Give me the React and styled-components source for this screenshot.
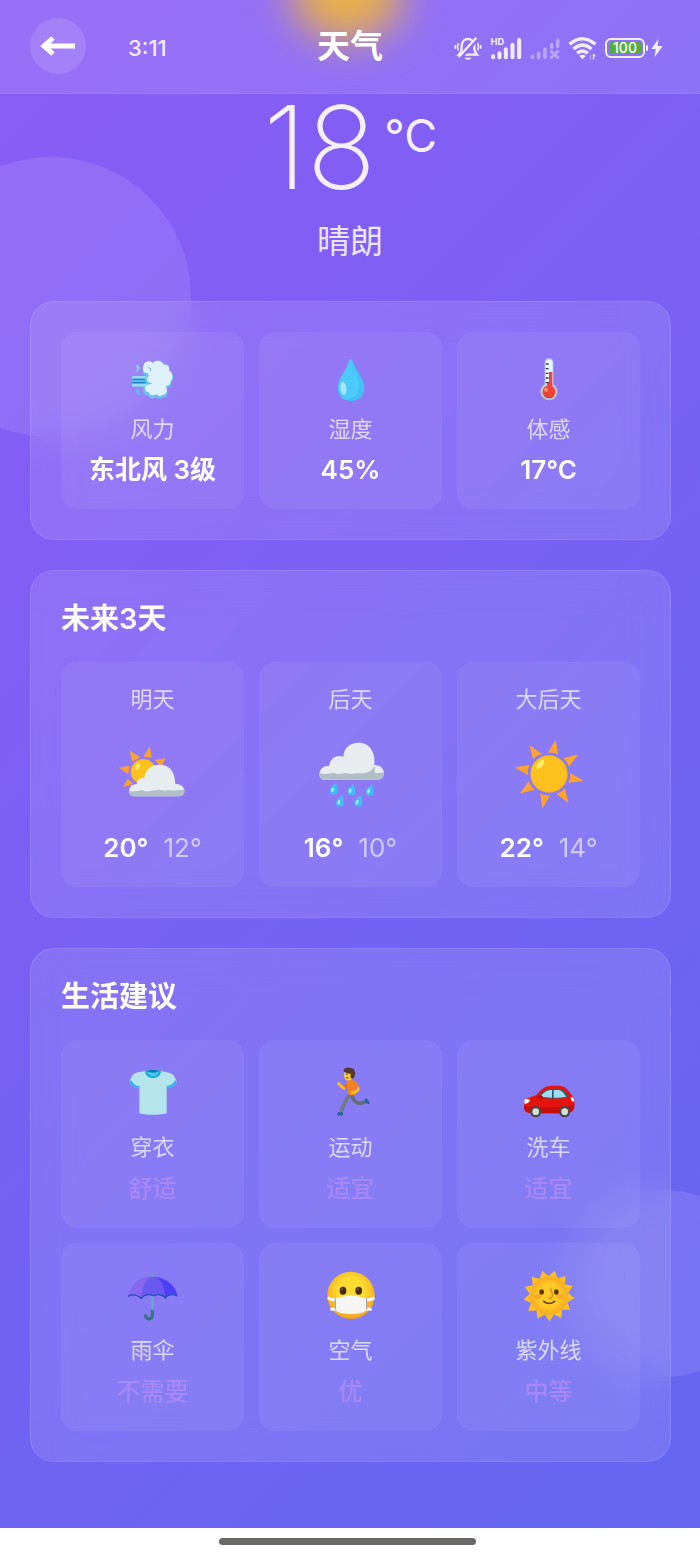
import React from "react";
import styled, { createGlobalStyle } from "styled-components";

const GlobalStyle = createGlobalStyle`
  * {
    box-sizing: border-box;
  }

  body {
    margin: 0;
    background: #fff;
    color: #fff;
    font-family: Inter, "Noto Sans CJK SC", sans-serif;
  }

  h1, h2, p {
    margin: 0;
  }
`;

const WindIcon = () => (
  <svg viewBox="0 0 132 132" aria-hidden="true">
    <path
      d="M14 23c8-4 14 1 12 9-2 6-7 10-13 11 5-5 7-11 1-20z"
      fill="#8ccdf5"
    />
    <path d="M10 94c10-5 18 1 19 16-5 3-10 2-11-4-1-5-3-9-8-12z" fill="#5fb8ee" />
    <path
      d="M38 22c5-14 21-15 29-7 9-12 27-8 32 5 11-2 20 6 17 17 12 8 14 26 5 36 2 10-6 17-15 17 8 12 2 29-11 29-7 6-17 3-21-1-10 7-22 2-24-6-12 0-18-13-12-24 2-5-7-9-10-12V54h16C34 45 32 33 38 22z"
      fill="#6cc0ea"
    />
    <path
      d="M38 21c5-13 20-14 28-6 9-11 26-8 31 5 12-2 20 7 17 17 12 9 13 24 5 33 0 10-8 14-16 14 10 12 3 27-9 27-7 6-14 1-18-3-10 7-22 3-23-6-12 0-14-14-7-22 9 0 14-2 18-5-11 0-17-6-20-12 9-3 11-10 6-18-13 2-17-12-12-24z"
      fill="#dff1f8"
    />
    <path d="M50 28c9-1 14 7 9 15 1-6-2-11-9-15z" fill="#5fb8e2" />
    <path d="M3 54h43v8H3zM3 78h44v8H3z" fill="#94dcf5" />
    <path d="M3 62h45v16H3z" fill="#53bdeb" />
    <path d="M5 64h37M5 74h37" stroke="#1976b8" strokeWidth="3" />
  </svg>
);

const DropIcon = () => (
  <svg viewBox="0 0 132 132" aria-hidden="true">
    <path
      d="M66 3c-5 2-7 9-11 20-8 20-28 40-28 67 0 24 17 39 39 39s40-15 40-39c0-27-20-47-29-67C72 12 71 5 66 3z"
      fill="#40c0f3"
    />
    <path
      d="M66 3c-5 2-7 9-11 20-8 20-28 40-28 67 0 18 9 30 23 36 25-2 46-22 39-56C84 49 75 30 66 3z"
      fill="#4cc9f8"
    />
    <ellipse cx="43" cy="91" rx="9" ry="20" fill="#a4e7fc" transform="rotate(-7 43 91)" />
  </svg>
);

const ThermometerIcon = () => (
  <svg viewBox="0 0 132 132" aria-hidden="true">
    <path d="M53 14a13 13 0 0 1 26 0v64H53z" fill="#b9d4f7" />
    <circle cx="66" cy="101" r="26" fill="#b8c5cc" />
    <path d="M56 15a10 10 0 0 1 20 0v70H56z" fill="#eef8fc" />
    <path d="M66 42h10v48H60V72h6z" fill="#f44336" />
    <circle cx="66" cy="101" r="19" fill="#f44336" />
    <path d="M50 107c8 11 21 14 32 4-5 11-26 14-32-4z" fill="#b83240" />
    <ellipse cx="57" cy="95" rx="5" ry="6" fill="#ffa18b" />
    <path
      d="M56 18h9M56 32h9M56 46h9M56 60h9M56 74h9"
      stroke="#2f4650"
      strokeWidth="4"
    />
  </svg>
);

const PartlyCloudyIcon = () => (
  <svg viewBox="0 0 216 216" aria-hidden="true">
    <path
      d="M98 27l5 31-22-3zM40 40l28 18-22 12zM8 89l30-4-6 22zM20 146l12-22 15 13zM145 62l-29 4 15 19z"
      fill="#ffa229"
      stroke="#ffa229"
      strokeWidth="2"
      strokeLinejoin="round"
    />
    <circle cx="79" cy="101" r="38" fill="#ffb70d" />
    <circle cx="79" cy="101" r="35" fill="#fdc21c" />
    <ellipse cx="62" cy="85" rx="6" ry="10" fill="#fff176" transform="rotate(35 62 85)" />
    <path
      d="M52 175c-22 0-22-36 7-37 2-15 15-20 23-17 1-23 17-41 47-41 27 0 45 19 46 58 32-2 36 37 9 37z"
      fill="#e7ecee"
    />
    <path
      d="M35 158c20 6 30 0 41-2 14 9 26 1 42 1 12-6 20 6 35-1 15 5 35-1 51-1-1 13-7 20-16 20H52c-10 0-17-7-17-17z"
      fill="#b0bec5"
    />
  </svg>
);

const RAIN_DROPS = [
  [58, 151],
  [111, 154],
  [166, 155],
  [77, 188],
  [132, 188],
];

const RainIcon = () => (
  <svg viewBox="0 0 216 216" aria-hidden="true">
    <path
      d="M28 125c-22 0-21-43 15-42 1-20 20-34 42-27 2-27 20-42 46-42 34 0 51 30 47 67 36-1 37 44 10 44z"
      fill="#e8ecef"
    />
    <path
      d="M12 104c16 7 31 3 42 0 15 7 29 2 40 1 14 6 29 0 43 1 25-1 33-8 42-23 1 22-7 25 28 20 0 16-7 22-19 22H29c-11 0-18-9-17-21z"
      fill="#b2bec6"
    />
    {RAIN_DROPS.map(([x, y]) => (
      <g key={x} transform={`translate(${x} ${y}) rotate(16)`}>
        <path d="M0-19c4 11 12 17 12 26 0 16-24 16-24 0 0-9 8-15 12-26z" fill="#40bdf5" />
        <ellipse cx="-4" cy="6" rx="4" ry="7" fill="#a6ecfc" />
      </g>
    ))}
  </svg>
);

const SUN_RAYS = [11, 56, 101, 146, 191, 236, 281, 326];

const SunIcon = () => (
  <svg viewBox="0 0 216 216" aria-hidden="true">
    {SUN_RAYS.map((angle) => (
      <path
        key={angle}
        d="M108 7l13 37q-13-5-26 0z"
        fill="#ffa32c"
        stroke="#ffa32c"
        strokeWidth="3"
        strokeLinejoin="round"
        transform={`rotate(${angle} 108 108)`}
      />
    ))}
    <circle cx="108" cy="108" r="56" fill="#fdb515" />
    <circle cx="107" cy="107" r="53" fill="#fdc01c" />
    <ellipse cx="82" cy="79" rx="8" ry="16" fill="#fff06d" transform="rotate(38 82 79)" />
  </svg>
);

const ShirtIcon = () => (
  <svg viewBox="0 0 156 156" aria-hidden="true">
    <path
      d="M55 14C42 18 24 18 18 26c-5 8-10 17-10 23 6 8 14 14 25 18l4-9v83c8 7 74 7 82 0V58l6 9c10-4 19-10 24-18-1-9-6-17-11-23-8-7-24-8-37-12-12 8-34 8-46 0z"
      fill="#b5e4ec"
    />
    <path
      d="M8 49c6 8 14 14 25 18l3-6C25 58 17 52 12 42zM149 49c-5 8-14 14-24 18l-4-6c10-3 20-10 24-19z"
      fill="#25b7e8"
    />
    <path d="M54 14c0 29 48 29 48 0-12-3-36-3-48 0z" fill="#1ba8dc" />
    <path d="M61 16c0 19 34 19 34 0-9 5-25 5-34 0z" fill="#4bcbed" />
    <path d="M61 16c9-5 25-5 34 0-9 5-25 5-34 0z" fill="#087eaf" />
    <path d="M38 57v18M119 57v18" stroke="#8acddd" strokeWidth="2" />
  </svg>
);

const RunnerIcon = () => (
  <svg viewBox="0 0 156 156" aria-hidden="true">
    <path d="M68 55L58 66" stroke="#ef6c00" strokeWidth="9" />
    <path
      d="M57 67L44 57"
      stroke="#fcc21b"
      strokeWidth="8"
      strokeLinecap="round"
    />
    <circle cx="41" cy="53" r="5" fill="#fcc21b" />
    <path
      d="M72 86c-3 12-16 24-24 52"
      fill="none"
      stroke="#717b85"
      strokeWidth="12"
    />
    <path
      d="M80 86c2 10 10 22 18 25 8 1 14-1 22-4"
      fill="none"
      stroke="#636d77"
      strokeWidth="11"
    />
    <path d="M40 138l14 1v8q-9 3-18 1 0-7 4-10zM118 101l8-4 9 15q-3 4-7 1l-8-2z" fill="#28679d" />
    <path d="M66 46c10-7 22-4 26 2 3 12-1 27-2 38-8 4-16 2-21-3 1-15-7-25-3-37z" fill="#f58220" />
    <path d="M89 49l11 18" stroke="#f58220" strokeWidth="9" />
    <path
      d="M100 67q1 7-14 13"
      fill="none"
      stroke="#fcc21b"
      strokeWidth="8"
      strokeLinecap="round"
    />
    <circle cx="82" cy="80" r="5" fill="#fcc21b" />
    <path d="M60 16c-5 14-3 27 8 28l12-3 4-18-13-12z" fill="#fcc930" />
    <path
      d="M56 16C56 4 70 3 76 6c14 0 17 15 13 24-1 8-9 10-12 5V23C68 25 60 19 56 16z"
      fill="#543930"
    />
    <circle cx="65" cy="25" r="2" fill="#3b2a25" />
    <path d="M62 35l8 1" stroke="#7d3f18" strokeWidth="3" />
  </svg>
);

const CarIcon = () => (
  <svg viewBox="0 0 156 156" aria-hidden="true">
    <path
      d="M4 108c0-9 20-16 35-20 14-16 26-29 46-29h22c18 0 29 12 41 31 9 8 8 33 3 42-6 9-22 10-34 10H32C16 142 4 139 3 126z"
      fill="#e6140e"
    />
    <path d="M3 119c29 7 107 8 151-3-2 22-9 26-37 26H32C14 142 4 137 3 119z" fill="#c90d0e" />
    <path d="M46 93c10-14 22-25 43-25h17c13 0 22 9 31 25-22 6-65 6-91 0z" fill="#355a6b" />
    <path d="M52 92c9-12 19-20 35-20v23zM92 72h15c10 1 16 11 23 20-12 3-26 4-38 3z" fill="#9be0f5" />
    <path d="M4 101c8-2 15-1 17 2-3 7-7 10-16 11zM144 93c5 0 10 3 9 14-7 0-11-7-9-14z" fill="#fff" />
    <ellipse cx="51" cy="94" rx="9" ry="6" fill="#bd1010" />
    <circle cx="38" cy="137" r="17" fill="#47494c" />
    <circle cx="125" cy="137" r="17" fill="#47494c" />
    <circle cx="38" cy="137" r="10" fill="#d3ddd0" />
    <circle cx="125" cy="137" r="10" fill="#d3ddd0" />
  </svg>
);

const UmbrellaIcon = () => (
  <svg viewBox="0 0 156 156" aria-hidden="true">
    <path d="M73 10h6v20h-6z" fill="#719ac6" />
    <path
      d="M76 122v17c0 14-20 14-20 1"
      fill="none"
      stroke="#397387"
      strokeWidth="10"
      strokeLinecap="round"
    />
    <path
      d="M4 81C9 48 39 23 76 23s70 25 75 58c-10-8-28-8-36 6-8-10-24-10-38-9-14-2-29 0-37 10-9-12-24-14-36-7z"
      fill="#6a58f0"
    />
    <path d="M4 81C9 48 39 23 76 23 54 29 45 57 43 88c-9-12-27-14-39-7z" fill="#8667ee" />
    <path d="M76 23c32 3 37 38 39 64 7-14 26-13 36-6-4-34-36-56-75-58z" fill="#4d3ff5" />
    <path
      d="M4 82c14-8 29-3 38 6 10-13 26-13 37-7 12-6 28-6 36 6 8-13 25-12 36-6"
      fill="none"
      stroke="#2450b8"
      strokeWidth="4"
    />
    <path d="M73 82h7v42h-7z" fill="#69a9d0" />
  </svg>
);

const MaskIcon = () => (
  <svg viewBox="0 0 156 156" aria-hidden="true">
    <defs>
      <radialGradient id="maskFace" cx="50%" cy="42%" r="58%">
        <stop offset="50%" stopColor="#fddb30" />
        <stop offset="100%" stopColor="#f3a31b" />
      </radialGradient>
    </defs>
    <circle cx="78" cy="79" r="71" fill="url(#maskFace)" />
    <path
      d="M8 86q12 8 25 6M148 86q-12 8-25 6M16 120q9 2 18-1M140 120q-9 2-18-1"
      fill="none"
      stroke="#f5f5f5"
      strokeWidth="9"
    />
    <path d="M31 88c12 0 27-9 47-9s33 9 47 9v36c-10 9-28 11-47 11s-38-2-47-11z" fill="#f5f5f5" />
    <path d="M31 88v34M125 88v34" stroke="#999b9b" strokeWidth="3" />
    <ellipse cx="54" cy="65" rx="10" ry="12" fill="#422b0d" />
    <ellipse cx="101" cy="65" rx="10" ry="12" fill="#422b0d" />
    <circle cx="51" cy="61" r="3" fill="#8d5b22" />
    <circle cx="98" cy="61" r="3" fill="#8d5b22" />
  </svg>
);

const starPoints = Array.from({ length: 26 }, (_, i) => {
  const radius = i % 2 === 0 ? 77 : 58;
  const angle = ((i * 360) / 26 - 105) * (Math.PI / 180);
  return `${(78 + radius * Math.cos(angle)).toFixed(1)},${(
    80 +
    radius * Math.sin(angle)
  ).toFixed(1)}`;
}).join(" ");

const SunFaceIcon = () => (
  <svg viewBox="0 0 156 156" aria-hidden="true">
    <defs>
      <radialGradient id="sunFace">
        <stop offset="55%" stopColor="#fdcb25" />
        <stop offset="100%" stopColor="#f8aa20" />
      </radialGradient>
    </defs>
    <polygon points={starPoints} fill="#fcbf22" />
    <circle cx="78" cy="80" r="57" fill="url(#sunFace)" />
    <ellipse cx="45" cy="82" rx="11" ry="8" fill="#f99d28" opacity="0.7" />
    <ellipse cx="112" cy="82" rx="11" ry="8" fill="#f99d28" opacity="0.7" />
    <ellipse cx="56" cy="69" rx="7" ry="8" fill="#5b3712" />
    <ellipse cx="100" cy="69" rx="7" ry="8" fill="#5b3712" />
    <path
      d="M82 59c6 12 9 22 4 27-3 3-7 2-9 0"
      fill="none"
      stroke="#e88116"
      strokeWidth="4"
    />
    <path
      d="M62 97q16 13 33 0"
      fill="none"
      stroke="#6a3c13"
      strokeWidth="5"
      strokeLinecap="round"
    />
  </svg>
);

const BackIcon = () => (
  <svg width="36" height="20" viewBox="0 0 36 20" aria-hidden="true">
    <path d="M4 10h31M13 2L4 10l9 8" fill="none" stroke="#fff" strokeWidth="5" />
  </svg>
);

const MutedIcon = () => (
  <svg width="28" height="24" viewBox="0 0 82 72" aria-label="静音">
    <g fill="none" stroke="#f1edff" strokeWidth="7">
      <path d="M18 56h50q-7-8-8-17V28C59 15 50 9 41 9S23 16 22 28v11q0 9-8 17z" />
      <path d="M12 21q-5 11 0 22M3 27v11M70 21q5 11 0 22M79 27v11" strokeWidth="5" />
    </g>
    <path d="M18 68L72 8" stroke="#8f6ff6" strokeWidth="8" />
    <path d="M13 63L66 5" stroke="#f1edff" strokeWidth="7" />
    <path d="M30 65h22q-3 6-11 6t-11-6z" fill="#f1edff" />
  </svg>
);

const SignalIcon = () => (
  <svg width="32" height="24" viewBox="0 0 93 72" aria-label="信号">
    <path
      d="M8 64v-3M27 64V52M46 64V40M66 64V26M86 64V12"
      stroke="#f1edff"
      strokeWidth="12"
      strokeLinecap="round"
    />
    <text x="0" y="26" fill="#f1edff" fontSize="28" fontWeight="700">
      HD
    </text>
  </svg>
);

const NoSignalIcon = () => (
  <svg width="30" height="24" viewBox="0 0 90 72" aria-label="无信号">
    <g fill="none" stroke="#b9a4fa" strokeWidth="11">
      <path d="M7 64v-3M26 64V52M45 64V40M65 34v-8M83 31V13" strokeLinecap="round" />
      <path d="M61 44l25 23M86 44L61 67" strokeWidth="9" />
    </g>
  </svg>
);

const WifiIcon = () => (
  <svg width="29" height="24" viewBox="0 0 84 72" aria-label="无线网络">
    <g fill="none" stroke="#f1edff" strokeWidth="10">
      <path d="M3 25q38-34 78 0" />
      <path d="M15 39q27-24 54 0" />
      <path d="M26 52q16-14 32 0" />
    </g>
    <path d="M32 60q10-8 20 0L42 70z" fill="#f1edff" />
    <path d="M66 70V57" stroke="#b9a4fa" strokeWidth="4" />
    <path d="M75 54v16" stroke="#f1edff" strokeWidth="4" />
    <path d="M75 54l8 7h-8z" fill="#f1edff" />
  </svg>
);

const BoltIcon = () => (
  <svg width="12" height="20" viewBox="0 0 36 60" aria-label="充电中">
    <path d="M22 3L1 33h13l-3 25 24-34H20z" fill="#f1edff" />
  </svg>
);

const details = [
  { label: "风力", value: "东北风 3级", Icon: WindIcon },
  { label: "湿度", value: "45%", Icon: DropIcon },
  { label: "体感", value: "17°C", Icon: ThermometerIcon },
];

const forecast = [
  { day: "明天", high: "20°", low: "12°", Icon: PartlyCloudyIcon },
  { day: "后天", high: "16°", low: "10°", Icon: RainIcon },
  { day: "大后天", high: "22°", low: "14°", Icon: SunIcon },
];

const tips = [
  { label: "穿衣", value: "舒适", Icon: ShirtIcon },
  { label: "运动", value: "适宜", Icon: RunnerIcon },
  { label: "洗车", value: "适宜", Icon: CarIcon },
  { label: "雨伞", value: "不需要", Icon: UmbrellaIcon },
  { label: "空气", value: "优", Icon: MaskIcon },
  { label: "紫外线", value: "中等", Icon: SunFaceIcon },
];

const App = () => {
  return (
    <>
      <GlobalStyle />
      <Screen>
        <LeftBubble />
        <RightBubble />
        <Header>
          <Glow />
          <HeaderStart>
            <BackButton type="button" aria-label="返回">
              <BackIcon />
            </BackButton>
            <Clock>3:11</Clock>
          </HeaderStart>
          <Title>天气</Title>
          <StatusIcons>
            <MutedIcon />
            <SignalIcon />
            <NoSignalIcon />
            <WifiIcon />
            <Power>
              <Battery>
                <BatteryLevel>100</BatteryLevel>
              </Battery>
              <BoltIcon />
            </Power>
          </StatusIcons>
        </Header>

        <Hero>
          <Temperature>
            18<Unit>°C</Unit>
          </Temperature>
          <Condition>晴朗</Condition>
        </Hero>

        <Content>
          <Card>
            <Grid>
              {details.map(({ label, value, Icon }) => (
                <Tile key={label}>
                  <IconBox $height={52} $size={44}>
                    <Icon />
                  </IconBox>
                  <Label $top={8}>{label}</Label>
                  <Value>{value}</Value>
                </Tile>
              ))}
            </Grid>
          </Card>

          <Card>
            <CardTitle>未来3天</CardTitle>
            <Grid>
              {forecast.map(({ day, high, low, Icon }) => (
                <Tile key={day}>
                  <Label $top={0}>{day}</Label>
                  <ForecastIcon $height={80} $size={72}>
                    <Icon />
                  </ForecastIcon>
                  <Temps>
                    <High>{high}</High>
                    <Low>{low}</Low>
                  </Temps>
                </Tile>
              ))}
            </Grid>
          </Card>

          <Card>
            <CardTitle>生活建议</CardTitle>
            <Grid>
              {tips.map(({ label, value, Icon }) => (
                <Tile key={label}>
                  <IconBox $height={60} $size={52}>
                    <Icon />
                  </IconBox>
                  <Label $top={10}>{label}</Label>
                  <TipValue>{value}</TipValue>
                </Tile>
              ))}
            </Grid>
          </Card>
        </Content>
      </Screen>
      <HomeArea>
        <HomeBar />
      </HomeArea>
    </>
  );
};

export default App;

const Screen = styled.div`
  position: relative;
  overflow: hidden;
  padding-bottom: 66px;
  background: linear-gradient(135deg, #8b5cf6 0%, #6366f1 100%);
`;

const Bubble = styled.div`
  position: absolute;
  border-radius: 50%;
  background: rgba(255, 255, 255, 0.1);
`;

const LeftBubble = styled(Bubble)`
  top: 157px;
  left: -89px;
  width: 280px;
  height: 280px;
`;

const RightBubble = styled(Bubble)`
  right: -60px;
  bottom: 151px;
  width: 187px;
  height: 187px;
`;

const Header = styled.header`
  position: relative;
  display: grid;
  grid-template-columns: 1fr auto 1fr;
  align-items: center;
  height: 94px;
  padding: 0 30px 2px;
  overflow: hidden;
  background: rgba(255, 255, 255, 0.12);
  border-bottom: 1px solid rgba(255, 255, 255, 0.1);
`;

const Glow = styled.div`
  position: absolute;
  top: -50px;
  left: calc(50% - 58px);
  width: 110px;
  height: 90px;
  border-radius: 50%;
  background: #e9b048;
  filter: blur(20px);
`;

const HeaderStart = styled.div`
  display: flex;
  align-items: center;
  gap: 42px;
`;

const BackButton = styled.button`
  display: flex;
  align-items: center;
  justify-content: center;
  width: 56px;
  height: 56px;
  padding: 0;
  border: 0;
  border-radius: 50%;
  background: rgba(255, 255, 255, 0.12);
`;

const Clock = styled.span`
  padding-top: 4px;
  font-size: 22px;
  font-weight: 500;
  line-height: 28px;
  color: #f1edff;
`;

const Title = styled.h1`
  position: relative;
  font-size: 33px;
  font-weight: 600;
  line-height: 44px;
`;

const StatusIcons = styled.div`
  display: flex;
  align-items: center;
  justify-content: flex-end;
  gap: 8px;
  padding: 4px 7px 0 0;
`;

const Power = styled.div`
  display: flex;
  align-items: center;
  gap: 6px;
`;

const Battery = styled.div`
  position: relative;
  width: 40px;
  height: 20px;
  padding: 2px;
  border: 2px solid #f1edff;
  border-radius: 6px;

  &::after {
    content: "";
    position: absolute;
    top: 5px;
    right: -5px;
    width: 2px;
    height: 6px;
    border-radius: 1px;
    background: #f1edff;
  }
`;

const BatteryLevel = styled.div`
  height: 12px;
  border-radius: 3px;
  background: #55ad3f;
  font-size: 14px;
  font-weight: 500;
  line-height: 12px;
  text-align: center;
`;

const Hero = styled.section`
  display: flex;
  flex-direction: column;
  align-items: center;
  gap: 21px;
  padding: 4px 0 38px;
`;

const Temperature = styled.div`
  display: flex;
  align-items: flex-start;
  gap: 8px;
  font-size: 115px;
  font-weight: 200;
  line-height: 100px;
  color: #f5f0ff;
`;

const Unit = styled.span`
  padding-top: 8px;
  font-size: 45px;
  font-weight: 400;
  line-height: 60px;
`;

const Condition = styled.p`
  font-size: 33px;
  line-height: 44px;
  color: #ece5ff;
`;

const Content = styled.main`
  display: flex;
  flex-direction: column;
  gap: 30px;
  padding: 0 29px 0 30px;
`;

const Card = styled.section`
  padding: 30px;
  border: 1px solid rgba(255, 255, 255, 0.1);
  border-radius: 24px;
  background: rgba(255, 255, 255, 0.11);
  backdrop-filter: blur(20px);
`;

const CardTitle = styled.h2`
  margin-bottom: 25px;
  font-size: 29px;
  font-weight: 600;
  line-height: 36px;
`;

const Grid = styled.div`
  display: grid;
  grid-template-columns: repeat(3, 1fr);
  gap: 15px;
`;

const Tile = styled.div`
  display: flex;
  flex-direction: column;
  align-items: center;
  padding: 22px 0;
  border-radius: 16px;
  background: rgba(255, 255, 255, 0.06);
`;

const IconBox = styled.div`
  display: flex;
  align-items: center;
  height: ${({ $height }) => $height}px;

  svg {
    width: ${({ $size }) => $size}px;
    height: ${({ $size }) => $size}px;
  }
`;

const ForecastIcon = styled(IconBox)`
  margin: 20px 0 16px;
`;

const Label = styled.p`
  margin-top: ${({ $top }) => $top}px;
  font-size: 22px;
  line-height: 30px;
  color: rgba(255, 255, 255, 0.7);
`;

const Value = styled.p`
  margin-top: 8px;
  font-size: 26px;
  font-weight: 600;
  line-height: 35px;
`;

const TipValue = styled.p`
  margin-top: 9px;
  font-size: 24px;
  font-weight: 500;
  line-height: 35px;
  color: #a688f7;
`;

const Temps = styled.div`
  display: flex;
  gap: 15px;
  font-size: 26px;
  line-height: 35px;
`;

const High = styled.span`
  font-weight: 600;
`;

const Low = styled.span`
  color: rgba(255, 255, 255, 0.6);
`;

const HomeArea = styled.footer`
  display: flex;
  justify-content: center;
  height: 27px;
  padding: 10px 5px 0 0;
  background: #fff;
`;

const HomeBar = styled.div`
  width: 37%;
  height: 7px;
  border-radius: 4px;
  background: #686967;
`;
